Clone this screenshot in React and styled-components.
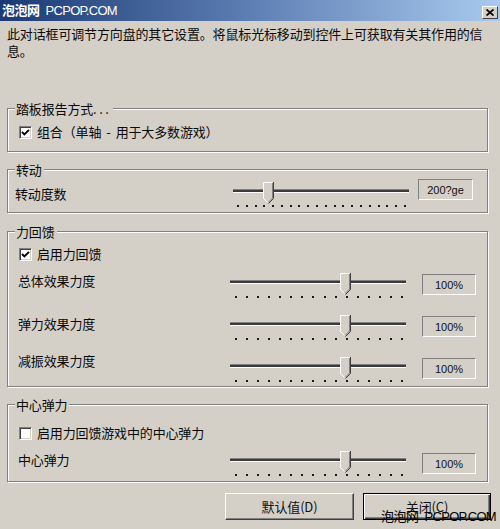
import React from "react";
import styled, { createGlobalStyle } from "styled-components";

const GlobalStyle = createGlobalStyle`
  html, body { margin: 0; padding: 0; background: #d4d0c8; }
  body {
    font-family: "Noto Sans CJK SC", "Noto Sans", sans-serif;
    color: #0a0a0a;
    letter-spacing: -0.15px;
  }
  * { box-sizing: border-box; }
`;

const Window = styled.div`
  position: relative;
  width: 500px;
  height: 529px;
  background: #d4d0c8;
  display: flex;
  flex-direction: column;
  overflow: hidden;
`;

const TitleBar = styled.div`
  height: 21px;
  display: flex;
  align-items: center;
  justify-content: space-between;
  padding: 0 2px 0 2px;
  background: linear-gradient(90deg, #1b3a74 0%, #5677ad 45%, #a9caee 100%);
`;

const Brand = styled.div`
  display: flex;
  align-items: baseline;
  color: ${(p) => p.$color};
  font-size: 13px;
  line-height: 16px;
  white-space: nowrap;
`;

const BrandCn = styled.span`
  font-family: "Noto Sans CJK SC", sans-serif;
  font-weight: ${(p) => (p.$bold ? 700 : 400)};
  letter-spacing: -0.5px;
`;

const BrandEn = styled.span`
  font-family: "Liberation Sans", Arial, sans-serif;
  font-size: 13px;
  letter-spacing: -0.7px;
  margin-left: 6px;
`;

const CloseButton = styled.div`
  align-self: flex-end;
  margin-bottom: 2px;
  width: 16px;
  height: 13px;
  background: #d4d0c8;
  border: 1px solid;
  border-color: #fff #404040 #404040 #fff;
  display: flex;
  align-items: center;
  justify-content: center;
`;

const Content = styled.div`
  display: flex;
  flex-direction: column;
  padding: 4px 12px 0 7px;
`;

const Description = styled.p`
  margin: 0 -6px 0 0;
  font-size: 13px;
  line-height: 17px;
`;

const GroupBox = styled.div`
  position: relative;
  margin-top: ${(p) => p.$mt}px;
  padding: ${(p) => p.$pad};
  border: 1px solid #808080;
  box-shadow: 1px 1px 0 #fff, inset 1px 1px 0 #fff;
  display: flex;
  flex-direction: column;
`;

const Legend = styled.span`
  position: absolute;
  top: -8px;
  left: 7px;
  padding: 0 2px 0 1px;
  background: #d4d0c8;
  font-size: 13px;
  line-height: 15px;
`;

const Dots = styled.span`
  letter-spacing: 2.5px;
`;

const CheckRow = styled.label`
  display: flex;
  align-items: center;
  height: 20px;
  gap: 5px;
  font-size: 13px;
  line-height: 16px;
`;

const Spaced = styled.span`
  margin: 0 5px;
`;

const CheckBox = styled.span`
  width: 13px;
  height: 13px;
  margin-left: 1px;
  flex: none;
  background: #fff;
  border: 1px solid;
  border-color: #808080 #fff #fff #808080;
  box-shadow: inset 1px 1px 0 #404040, inset -1px -1px 0 #d4d0c8;
  display: flex;
  align-items: center;
  justify-content: center;
`;

const SliderList = styled.div`
  display: flex;
  flex-direction: column;
  gap: 16px;
  margin-top: ${(p) => p.$mt}px;
`;

const SliderRow = styled.div`
  display: flex;
  align-items: flex-start;
  height: 26px;
`;

const RowLabel = styled.span`
  flex: 1;
  font-size: 13px;
  line-height: 18px;
  margin-top: ${(p) => p.$dy || 0}px;
  white-space: nowrap;
`;

const SliderBox = styled.div`
  position: relative;
  width: 176px;
  height: 26px;
  flex: none;
  display: flex;
  flex-direction: column;
`;

const Track = styled.div`
  margin-top: 7px;
  height: 4px;
  border-top: 1px solid #808080;
  border-bottom: 1px solid #fff;
  background: #3a3a3a;
`;

const Ticks = styled.div`
  margin-top: 12px;
  padding: 0 3px 0 ${(p) => p.$pl}px;
  display: flex;
  justify-content: space-between;
`;

const Tick = styled.span`
  width: 2px;
  height: 2px;
  background: #1a1a1a;
`;

const Thumb = styled.svg`
  position: absolute;
  top: 0;
  width: 11px;
  height: 22px;
`;

const ValueBox = styled.div`
  flex: none;
  width: ${(p) => p.$w}px;
  height: 21px;
  margin-left: ${(p) => p.$ml}px;
  margin-top: ${(p) => p.$dy}px;
  border: 1px solid;
  border-color: #808080 #fff #fff #808080;
  display: flex;
  align-items: center;
  justify-content: center;
  font-family: "Liberation Sans", Arial, sans-serif;
  font-size: 11px;
  letter-spacing: 0;
  color: #111;
`;

const ButtonRow = styled.div`
  display: flex;
  justify-content: flex-end;
  gap: 9px;
  margin: 11px -3px 0 0;
`;

const Button = styled.div`
  width: ${(p) => p.$w}px;
  height: 27px;
  background: #d4d0c8;
  border: 1px solid;
  border-color: ${(p) => (p.$default ? "#000" : "#fff #404040 #404040 #fff")};
  box-shadow: ${(p) =>
    p.$default
      ? "inset 1px 1px 0 #fff, inset -1px -1px 0 #404040, inset -2px -2px 0 #808080"
      : "inset -1px -1px 0 #808080"};
  display: flex;
  align-items: center;
  justify-content: center;
  font-size: 13px;
  line-height: 16px;
  color: #111;
`;

const Watermark = styled.div`
  position: absolute;
  right: 4px;
  bottom: 4px;
`;

function Check({ checked }) {
  return (
    <CheckBox>
      {checked && (
        <svg width="9" height="9" viewBox="0 0 9 9">
          <polyline
            points="1,4 3.4,6.4 8,1.8"
            fill="none"
            stroke="#000"
            strokeWidth="1.9"
          />
        </svg>
      )}
    </CheckBox>
  );
}

function Slider({ pos, ticks, tickStart = 5 }) {
  return (
    <SliderBox>
      <Track />
      <Ticks $pl={tickStart}>
        {Array.from({ length: ticks }).map((_, i) => (
          <Tick key={i} />
        ))}
      </Ticks>
      <Thumb style={{ left: pos }} viewBox="0 0 11 22">
        <polygon points="0,0 10,0 10,16 5,21 0,16" fill="#d4d0c8" />
        <polyline points="0.5,16.5 0.5,0.5 9.5,0.5" fill="none" stroke="#fff" />
        <polyline points="0.5,16.5 5,21" fill="none" stroke="#fff" />
        <polyline points="10.5,0 10.5,16.5 5.5,21.5" fill="none" stroke="#404040" />
        <polyline points="9.5,1 9.5,16 5,20.5" fill="none" stroke="#808080" />
      </Thumb>
    </SliderBox>
  );
}

function SliderField({ label, value, pos, ticks, labelDy, boxDy, boxW = 54, boxMl = 16, tickStart }) {
  return (
    <SliderRow>
      <RowLabel $dy={labelDy}>{label}</RowLabel>
      <Slider pos={pos} ticks={ticks} tickStart={tickStart} />
      <ValueBox $w={boxW} $ml={boxMl} $dy={boxDy}>
        {value}
      </ValueBox>
    </SliderRow>
  );
}

export default function App() {
  return (
    <>
      <GlobalStyle />
      <Window>
        <TitleBar>
          <Brand $color="#fff">
            <BrandCn $bold>泡泡网</BrandCn>
            <BrandEn>PCPOP.COM</BrandEn>
          </Brand>
          <CloseButton>
            <svg width="8" height="7" viewBox="0 0 8 7">
              <path d="M0.5,0.5 L7.5,6.5 M7.5,0.5 L0.5,6.5" stroke="#000" strokeWidth="1.7" />
            </svg>
          </CloseButton>
        </TitleBar>

        <Content>
          <Description>
            此对话框可调节方向盘的其它设置。将鼠标光标移动到控件上可获取有关其作用的信息。
          </Description>

          <GroupBox $mt={49} $pad="13px 11px 9px 10px">
            <Legend>
              踏板报告方式<Dots>...</Dots>
            </Legend>
            <CheckRow>
              <Check checked />
              <span>
                组合（单轴<Spaced>-</Spaced>用于大多数游戏）
              </span>
            </CheckRow>
          </GroupBox>

          <GroupBox $mt={17} $pad="12px 14px 4px 7px">
            <Legend>转动</Legend>
            <SliderField
              label="转动度数"
              value="200?ge"
              pos={30}
              ticks={20}
              tickStart={4}
              labelDy={3}
              boxDy={-3}
              boxW={55}
              boxMl={9}
            />
          </GroupBox>

          <GroupBox $mt={18} $pad="12px 11px 3px 10px">
            <Legend>力回馈</Legend>
            <CheckRow>
              <Check checked />
              <span>启用力回馈</span>
            </CheckRow>
            <SliderList $mt={9}>
              <SliderField label="总体效果力度" value="100%" pos={110} ticks={16} labelDy={-1} boxDy={1} />
              <SliderField label="弹力效果力度" value="100%" pos={110} ticks={16} labelDy={0} boxDy={1} />
              <SliderField label="减振效果力度" value="100%" pos={110} ticks={16} labelDy={-5} boxDy={1} />
            </SliderList>
          </GroupBox>

          <GroupBox $mt={17} $pad="18px 11px 4px 10px">
            <Legend>中心弹力</Legend>
            <CheckRow>
              <Check />
              <span>启用力回馈游戏中的中心弹力</span>
            </CheckRow>
            <SliderList $mt={8}>
              <SliderField label="中心弹力" value="100%" pos={110} ticks={16} labelDy={0} boxDy={2} />
            </SliderList>
          </GroupBox>

          <ButtonRow>
            <Button $w={129}>默认值(D)</Button>
            <Button $w={128} $default>
              关闭(C)
            </Button>
          </ButtonRow>
        </Content>

        <Watermark>
          <Brand $color="#000">
            <BrandCn>泡泡网</BrandCn>
            <BrandEn>PCPOP.COM</BrandEn>
          </Brand>
        </Watermark>
      </Window>
    </>
  );
}
